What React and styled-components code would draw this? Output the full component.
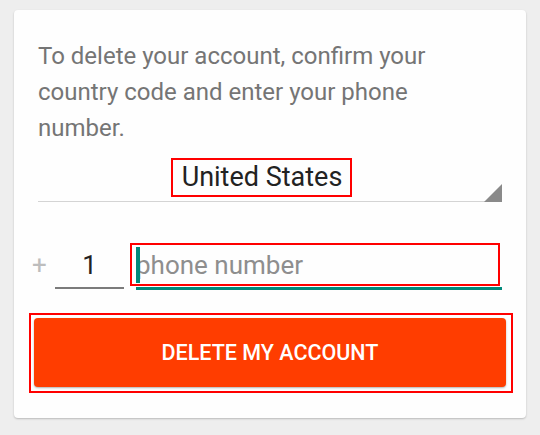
import React from 'react';
import styled, { createGlobalStyle } from 'styled-components';

const Global = createGlobalStyle`
  html, body {
    margin: 0;
    padding: 0;
    background: #eeeeee;
    font-family: Roboto, "Noto Sans", sans-serif;
  }
`;

const Page = styled.div`
  width: 540px;
  height: 435px;
  padding: 10px 14px 0 14px;
  box-sizing: border-box;
`;

const Card = styled.div`
  background: #fefefe;
  border-radius: 4px;
  box-shadow: 0 1px 2px rgba(0, 0, 0, 0.22);
  width: 512px;
  height: 408px;
  box-sizing: border-box;
  padding: 28px 24px 0 24px;
  display: flex;
  flex-direction: column;
`;

const Message = styled.p`
  margin: 0;
  font-size: 24px;
  line-height: 36px;
  color: #757575;
  padding-right: 20px;
`;

const Spinner = styled.div`
  position: relative;
  height: 56px;
  border-bottom: 1px solid #d4d4d4;
  display: flex;
  justify-content: center;
  align-items: flex-start;
  box-sizing: border-box;
  padding: 12px 17px 0 0;
`;

const Outlined = styled.div`
  outline: 2px solid #ff0000;
  outline-offset: -2px;
`;

const SpinnerValue = styled(Outlined)`
  font-size: 27px;
  color: #222222;
  line-height: 39px;
  padding: 0 10px 0 11px;
`;

const Arrow = styled.div`
  position: absolute;
  right: 0;
  bottom: -1px;
  width: 0;
  height: 0;
  border-style: solid;
  border-width: 0 0 18px 18px;
  border-color: transparent transparent #8a8a8a transparent;
`;

const PhoneRow = styled.div`
  margin-top: 41px;
  display: flex;
  align-items: flex-start;
  margin-left: -6px;
`;

const Plus = styled.span`
  font-size: 26px;
  color: #bdbdbd;
  width: 23px;
  line-height: 44px;
`;

const CodeField = styled.div`
  width: 69px;
  height: 46px;
  box-sizing: border-box;
  border-bottom: 2px solid #7b7b7b;
  font-size: 26px;
  color: #222222;
  text-align: center;
  line-height: 44px;
`;

const PhoneWrap = styled.div`
  position: relative;
  margin-left: 12px;
  flex: 1;
  height: 47px;
`;

const PhoneBox = styled(Outlined)`
  position: absolute;
  left: -6px;
  top: 0;
  right: 2px;
  height: 43px;
`;

const PhoneInput = styled.div`
  height: 47px;
  box-sizing: border-box;
  border-bottom: 3px solid #00897b;
  font-size: 26px;
  line-height: 44px;
  color: #8e8e8e;
  position: relative;
`;

const Cursor = styled.span`
  position: absolute;
  left: 0;
  top: 4px;
  width: 4px;
  height: 36px;
  background: #00897b;
`;

const ButtonFrame = styled(Outlined)`
  margin-top: 23px;
  margin-left: -9px;
  width: 484px;
  height: 80px;
  box-sizing: border-box;
  padding: 5px 7px 6px 5px;
`;

const DeleteButton = styled.button`
  display: block;
  width: 100%;
  height: 69px;
  border: none;
  border-radius: 4px;
  background: #ff3d00;
  box-shadow: 0 1px 2px rgba(0, 0, 0, 0.3);
  color: #ffffff;
  font-family: Roboto, sans-serif;
  font-weight: 500;
  font-size: 21.5px;
  text-transform: uppercase;
  cursor: pointer;
`;

export default function App() {
  return (
    <>
      <Global />
      <Page>
        <Card>
          <Message>
            To delete your account, confirm your country code and enter your phone number.
          </Message>
          <Spinner>
            <SpinnerValue>United States</SpinnerValue>
            <Arrow />
          </Spinner>
          <PhoneRow>
            <Plus>+</Plus>
            <CodeField>1</CodeField>
            <PhoneWrap>
              <PhoneInput>
                <Cursor />
                phone number
              </PhoneInput>
              <PhoneBox />
            </PhoneWrap>
          </PhoneRow>
          <ButtonFrame>
            <DeleteButton>Delete my account</DeleteButton>
          </ButtonFrame>
        </Card>
      </Page>
    </>
  );
}
